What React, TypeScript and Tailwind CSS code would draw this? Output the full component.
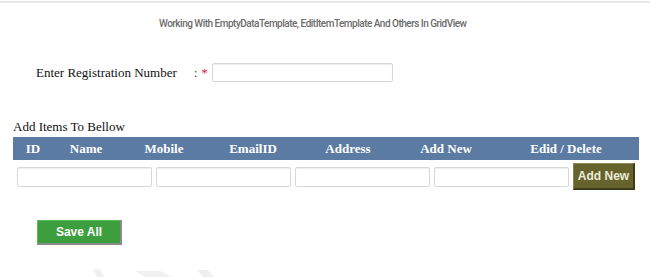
import React from "react";

const serif = { fontFamily: '"Liberation Serif", "Times New Roman", serif' };

export default function App() {
  const headers: string[] = ["ID", "Name", "Mobile", "EmailID", "Address", "Add New", "Edid / Delete"];
  return (
    <div className="relative w-[650px] h-[277px] bg-white overflow-hidden">
      <div className="h-[2px] mt-[1px] bg-[#e8e8e8]" />
      <div
        className="pl-[159px] mt-[15px] text-[10px] leading-[12px] font-medium text-[#6c6c6c] tracking-[-0.5px]"
        style={{ fontFamily: 'Roboto, "Liberation Sans", sans-serif' }}
      >
        Working With EmptyDataTemplate, EditItemTemplate And Others In GridView
      </div>

      <div className="flex items-center mt-[33px] h-[19px]" style={serif}>
        <span className="ml-[36px] w-[158px] text-[13px] text-[#111]">Enter Registration Number</span>
        <span className="text-[12px] text-[#333]">:</span>
        <span className="ml-[4px] text-[13px] text-[#e8202a] leading-none self-start mt-[3px]">*</span>
        <input className="ml-[4px] w-[181px] h-[19px] border border-[#d6d6d6] rounded-[2px] shadow-[inset_0_1px_1px_rgba(0,0,0,0.08)] bg-white" />
      </div>

      <div className="ml-[13px] mt-[37px] text-[13px] leading-[15px] text-[#111]" style={serif}>
        Add Items To Bellow
      </div>

      <div className="ml-[13px] mt-[3px] w-[626px] h-[23px] bg-[#5b7ba2] grid grid-cols-[40px_66px_90px_88px_102px_94px_146px] items-center" style={serif}>
        {headers.map((h) => (
          <div key={h} className="text-center text-white font-bold text-[13px] leading-none">
            {h}
          </div>
        ))}
      </div>

      <div className="flex items-center ml-[17px] mt-[3px] gap-[4px] h-[27px]">
        {[0, 1, 2, 3].map((i) => (
          <input
            key={i}
            className="w-[135px] h-[20px] border border-[#d8d8d8] rounded-[2px] shadow-[inset_0_1px_1px_rgba(0,0,0,0.07)] bg-white"
          />
        ))}
        <button
          className="w-[62px] h-[27px] bg-[#66642c] text-[#ecebd8] font-bold text-[12px] border-t border-l border-[#8a8850] border-r-2 border-b-2 border-r-[#3e3d1a] border-b-[#3e3d1a]"
          style={{ fontFamily: '"Liberation Sans", Arial, sans-serif' }}
        >
          Add New
        </button>
      </div>

      <button
        className="block ml-[37px] mt-[30px] w-[85px] h-[25px] bg-[#3c9e3c] text-white font-bold text-[12px] border-t border-l border-[#5cb85c] border-r-2 border-b-2 border-r-[#8a8a8a] border-b-[#8a8a8a]"
        style={{ fontFamily: '"Liberation Sans", Arial, sans-serif' }}
      >
        Save All
      </button>

      <svg className="absolute left-0 bottom-0" width="650" height="12" viewBox="0 0 650 12">
        <polygon points="93,4 100,4 104,12 97,12" fill="#efefef" />
        <polygon points="135,6 160,6 172,12 145,12" fill="#f1f1f1" />
        <polygon points="197,5 208,5 214,12 203,12" fill="#efefef" />
      </svg>
    </div>
  );
}
